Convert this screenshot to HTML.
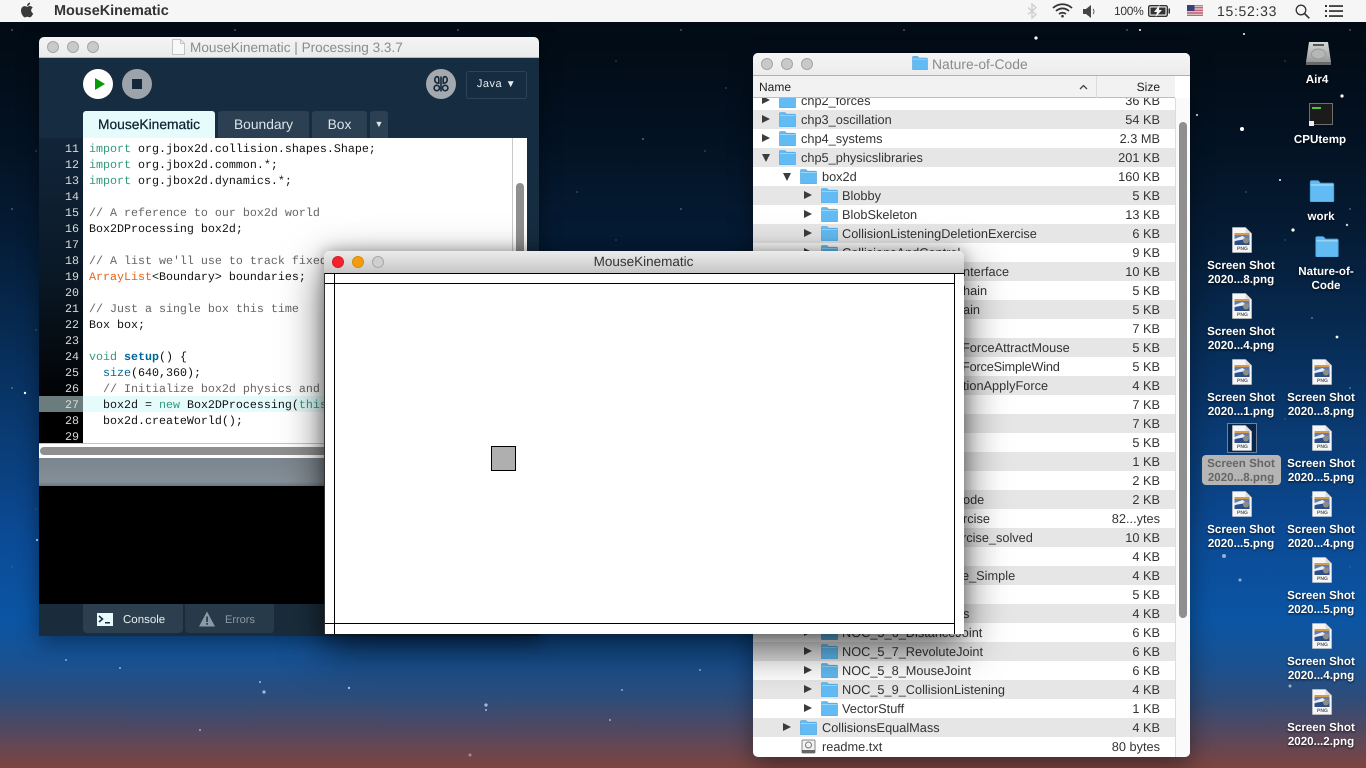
<!DOCTYPE html>
<html><head><meta charset="utf-8"><title>MouseKinematic</title>
<style>
*{box-sizing:border-box;margin:0;padding:0}
html,body{width:1366px;height:768px;overflow:hidden;background:#000}
body{position:relative;font-family:"Liberation Sans",sans-serif;text-rendering:geometricPrecision}
#wall{position:absolute;inset:0;background:linear-gradient(180deg,#020a12 0,#03101f 120px,#051c36 240px,#072c55 340px,#0a3d78 450px,#0b4b96 540px,#0b55a4 620px,#1a5190 665px,#2f4c78 700px,#54485f 732px,#7d4540 768px)}
#stars{position:absolute;inset:0;height:640px;opacity:.6;-webkit-mask-image:linear-gradient(#000 0,#000 380px,rgba(0,0,0,.35) 560px,transparent 640px);
background-image:radial-gradient(circle at 12px 30px,#fff 0,#fff .4px,transparent .9px),radial-gradient(circle at 57px 88px,#dfe9f5 0,#dfe9f5 .3px,transparent .8px),radial-gradient(circle at 131px 13px,#fff 0,#fff .3px,transparent .8px),radial-gradient(circle at 170px 61px,#cfe0f2 0,#cfe0f2 .3px,transparent .8px),radial-gradient(circle at 36px 151px,#fff 0,#fff .3px,transparent .8px),radial-gradient(circle at 197px 139px,#e8f0fa 0,#e8f0fa .5px,transparent 1px);background-size:223px 179px}
#s2{position:absolute;left:0;top:0}
#menu{position:absolute;left:0;top:0;width:1366px;height:22px;background:#f6f6f6;color:#333}
#menu span{position:absolute;top:0;line-height:23px;white-space:nowrap}
/* Processing */
#pw{position:absolute;left:39px;top:37px;width:500px;height:599px;background:#162c40;border-radius:5px 5px 0 0;overflow:hidden;box-shadow:0 6px 22px rgba(0,0,0,.4)}
#pt{position:absolute;left:0;top:0;width:500px;height:21px;background:linear-gradient(#f4f4f4,#ebebeb);border-bottom:1px solid #b8b8b8}
.tl{position:absolute;width:12px;height:12px;border-radius:50%;background:#c9c9c9;border:1px solid #a6a6a6}
.ttl{position:absolute;white-space:nowrap;color:#8b8b8b}
.tab{position:absolute;top:74px;height:27px;background:#2b4053;color:#dce4ea;border-radius:3px 3px 0 0;font-size:13.8px;line-height:27px;text-align:center;white-space:nowrap}
#gut{position:absolute;left:0;top:101px;width:44px;height:305px;background:linear-gradient(#11253a 0,#0a1826 45%,#000 90%);color:#d8dcdc;font:11.67px/16px "Liberation Mono",monospace;text-align:right;padding:3px 4px 0 0;overflow:hidden}
#ed{position:absolute;left:44px;top:101px;width:444px;height:305px;background:#fff;overflow:hidden;font:11.67px/16px "Liberation Mono",monospace;color:#111;white-space:pre;padding:3px 0 0 6px}
#gut div,#ed div{height:16px;position:relative}
#gut div.hl,#ed div.hl{position:absolute;top:258px;left:0;height:16px}
.k{color:#33997e}.c{color:#666}.o{color:#e2661a}.f{color:#006699;font-weight:bold}
/* Finder */
#fw{position:absolute;left:753px;top:53px;width:437px;height:704px;background:#fff;border-radius:5px;overflow:hidden;box-shadow:0 8px 24px rgba(0,0,0,.4)}
#list{position:absolute;left:0;top:45px;width:422px;height:659px;overflow:hidden;font-size:12.75px;color:#333}
#rows{position:absolute;left:0;top:-7px;width:422px}
.r{position:relative;height:19px;line-height:19px;white-space:nowrap}
.r:nth-child(even){background:#e6e6e6}
.r svg{position:absolute;top:2px;width:17px;height:15px}
.r .n{position:absolute}
.r .s{position:absolute;right:15px}
.r i{position:absolute;top:5px;width:0;height:0;border-left:8px solid #3c3c3c;border-top:4.5px solid transparent;border-bottom:4.5px solid transparent}
.r i.d{border-left:4.5px solid transparent;border-right:4.5px solid transparent;border-top:8px solid #3c3c3c;border-bottom:0;top:6px}
.a svg{left:26px}.a .n{left:48px}.a i{left:9px}
.b svg{left:47px}.b .n{left:69px}.b i{left:30px}
.e svg{left:68px}.e .n{left:89px}.e i{left:51px}
.r .g{position:absolute;left:210px}
/* Sketch */
#sk{position:absolute;left:324px;top:251px;width:640px;height:383px;box-shadow:0 14px 42px rgba(0,0,0,.62),0 0 14px rgba(0,0,0,.3);border-radius:5px 5px 0 0;background:#fff;overflow:hidden}
#skt{position:absolute;left:0;top:0;width:640px;height:22px;background:linear-gradient(#ececec,#c6c6c6)}
.bl{position:absolute;background:#000}
/* Desktop */
.lab{position:absolute;width:86px;text-align:center;color:#fff;font-weight:bold;font-size:11.6px;line-height:14px;text-shadow:0 1px 2px rgba(0,0,0,.8);white-space:nowrap}
.png{position:absolute;width:20px;height:26px}
.png text{font:bold 5px "Liberation Sans",sans-serif;fill:#555}
</style></head><body>
<svg width="0" height="0" style="position:absolute"><defs>
<symbol id="fd" viewBox="0 0 17 15"><path d="M.5 3V1.4C.5.8.9.5 1.4.5h4c.5 0 .8.2 1 .5l1 1.2h8.2c.5 0 .9.4.9.9v11c0 .5-.4.9-.9.9H1.4c-.5 0-.9-.4-.9-.9z" fill="#62bcf3" stroke="#4a9fd8" stroke-width=".6"/><path d="M.8 3.4h15.4" stroke="#a4dcfb" stroke-width=".8"/></symbol>
<symbol id="pg" viewBox="0 0 20 26"><path d="M.5.5h13l6 6v19H.5z" fill="#f6f6f6" stroke="#cfcfcf" stroke-width=".6"/><path d="M13.5.5v6h6z" fill="#ddd"/><rect x="2.5" y="6" width="15" height="12" fill="#5c7fb8"/><rect x="2.5" y="6" width="15" height="2" fill="#d89a4a"/><path d="M2.5 15l6-4 9 2v5h-15z" fill="#2c4d8a"/><path d="M2.5 12l8-3 4 3-12 2z" fill="#e8eef5"/><circle cx="14" cy="13.5" r="3" fill="#8d8d86"/></symbol>
</defs></svg>
<div id="wall"></div><div id="stars"></div>
<svg id="s2" width="1366" height="768" fill="#fff">
<circle cx="1036" cy="38" r="1.6"/><circle cx="1242" cy="129" r="2"/><circle cx="1342" cy="96" r="1.6"/><circle cx="1293" cy="230" r="1.6"/><circle cx="1140" cy="30" r="1"/><circle cx="1244" cy="34" r="1"/><circle cx="1197" cy="115" r="1"/><circle cx="1280" cy="180" r="1"/><circle cx="1347" cy="225" r="1.2" opacity=".8"/><circle cx="1337" cy="337" r="1.4"/><circle cx="25" cy="393" r="1.2"/><circle cx="37" cy="540" r="1"/><circle cx="1224" cy="556" r="2" fill="#8fb3d8"/><circle cx="1240" cy="580" r="1.5" fill="#8fb3d8"/><circle cx="1290" cy="686" r="1.5" fill="#9fb3cc"/><circle cx="264" cy="692" r="1.6" fill="#9cc0e6"/><circle cx="486" cy="705" r="1.6" fill="#9cc0e6"/><circle cx="349" cy="688" r="1.2" fill="#9cc0e6"/><circle cx="486" cy="710" r="1" fill="#9cc0e6"/><circle cx="260" cy="682" r="1" fill="#9cc0e6"/><circle cx="622" cy="690" r="1" fill="#8fb3d8"/><circle cx="700" cy="670" r="1" fill="#8fb3d8"/><circle cx="610" cy="720" r="1" fill="#a7a7c0"/><circle cx="120" cy="668" r="1" fill="#8fb3d8"/><circle cx="66" cy="660" r="1" fill="#8fb3d8"/><circle cx="200" cy="730" r="1" fill="#a7a7c0"/><circle cx="470" cy="755" r="1.5" fill="#a88"/>
</svg>

<!-- Processing window -->
<div id="pw">
 <div id="pt"></div>
 <div class="tl" style="left:8px;top:4px"></div><div class="tl" style="left:28px;top:4px"></div><div class="tl" style="left:48px;top:4px"></div>
 <svg style="position:absolute;left:133px;top:2px" width="13" height="16"><path d="M.5.5h8l4 4v11H.5z" fill="#f8f8f8" stroke="#c4c4c4"/><path d="M8.5.5v4h4" fill="none" stroke="#c4c4c4"/></svg>
 <div class="ttl" style="left:151px;top:2px;font-size:13.6px;line-height:17px">MouseKinematic | Processing 3.3.7</div>
 <svg style="position:absolute;left:44px;top:31px" width="72" height="32"><circle cx="15" cy="16" r="15" fill="#fff"/><path d="M12 10L22 16l-10 6z" fill="#0a9a06"/><circle cx="54" cy="16" r="15" fill="#9da3aa"/><rect x="49" y="11" width="10" height="10" fill="#13283a"/></svg>
 <svg style="position:absolute;left:387px;top:31px" width="30" height="32" fill="none" stroke="#14283a" stroke-width="1.6"><circle cx="15" cy="16" r="15" fill="#a3a9af" stroke="none"/><path d="M15 8.500v15"/><path d="M12.800 15.200c-2.800 0-4.300-1.500-4-4 .2-1.800 1.500-2.800 2.600-2.500 1 .3 1.400 1.300 1.400 2.500z"/><path d="M17.200 15.200c2.800 0 4.300-1.500 4-4-.2-1.800-1.500-2.800-2.600-2.500-1 .3-1.400 1.300-1.400 2.500z"/><circle cx="10.800" cy="20" r="2.700"/><circle cx="19.200" cy="20" r="2.700"/></svg>
 <div style="position:absolute;left:427px;top:34px;width:61px;height:28px;border:1px solid #2d4458;border-radius:3px;color:#e6ecf0;font-size:11px;line-height:25px;text-align:center;letter-spacing:.5px">Java <span style="font-size:10px">&#9660;</span></div>
 <div class="tab" style="left:44px;width:132px;background:#e6fbfb;color:#0d2233;-webkit-text-stroke:.25px #0d2233">MouseKinematic</div>
 <div class="tab" style="left:179px;width:91px">Boundary</div>
 <div class="tab" style="left:273px;width:55px">Box</div>
 <div class="tab" style="left:331px;width:18px;font-size:9px">&#9660;</div>
 <div id="gut"><div class="hl" style="background:#6b7c7c;width:44px"></div><div>11</div><div>12</div><div>13</div><div>14</div><div>15</div><div>16</div><div>17</div><div>18</div><div>19</div><div>20</div><div>21</div><div>22</div><div>23</div><div>24</div><div>25</div><div>26</div><div>27</div><div>28</div><div>29</div></div>
 <div id="ed"><div class="hl" style="background:#e6fbfb;width:444px"></div><div><span class="k">import</span> org.jbox2d.collision.shapes.Shape;</div><div><span class="k">import</span> org.jbox2d.common.*;</div><div><span class="k">import</span> org.jbox2d.dynamics.*;</div><div></div><div class="c">// A reference to our box2d world</div><div>Box2DProcessing box2d;</div><div></div><div class="c">// A list we'll use to track fixed objects</div><div><span class="o">ArrayList</span>&lt;Boundary&gt; boundaries;</div><div></div><div class="c">// Just a single box this time</div><div>Box box;</div><div></div><div><span class="k">void</span> <span class="f">setup</span>() {</div><div>  <span style="color:#006699">size</span>(640,360);</div><div class="c">  // Initialize box2d physics and create the world</div><div>  box2d = <span class="k">new</span> Box2DProcessing(<span class="k">this</span>);</div><div>  box2d.createWorld();</div><div></div></div>
 <div style="position:absolute;left:473px;top:101px;width:1px;height:305px;background:#c8c8c8"></div>
 <div style="position:absolute;left:477px;top:146px;width:8px;height:120px;background:#8f8f8f;border-radius:4px"></div>
 <div style="position:absolute;left:0;top:406px;width:500px;height:15px;background:#fff;border-top:1px solid #c4c4c4"></div>
 <div style="position:absolute;left:1px;top:410px;width:480px;height:8px;background:#8f8f8f;border-radius:4px"></div>
 <div style="position:absolute;left:0;top:421px;width:500px;height:28px;background:linear-gradient(#7b858d,#858f97 85%,#6d777f)"></div>
 <div style="position:absolute;left:0;top:449px;width:500px;height:118px;background:#000"></div>
 <div style="position:absolute;left:0;top:567px;width:500px;height:32px;background:#1a2c3b"></div>
 <div style="position:absolute;left:44px;top:567px;width:100px;height:29px;background:#2c3f4e;border-radius:0 0 4px 4px"></div>
 <div style="position:absolute;left:146px;top:567px;width:89px;height:29px;background:#273a49;border-radius:0 0 4px 4px"></div>
 <svg style="position:absolute;left:58px;top:576px" width="16" height="13"><rect width="16" height="13" fill="#e6fbfb"/><path d="M2 3l3.500 3L2 9" fill="none" stroke="#1a2c3b" stroke-width="1.500"/><rect x="8" y="9" width="5" height="1.500" fill="#1a2c3b"/></svg>
 <div class="ttl" style="left:84px;top:575px;color:#e6eef2;font-size:11.5px;line-height:16px">Console</div>
 <svg style="position:absolute;left:160px;top:574px" width="16" height="16"><path d="M8 .5L16 15.500H0z" fill="#8b9aa4"/><rect x="7.200" y="5.500" width="1.700" height="5.500" fill="#273a49"/><rect x="7.200" y="12" width="1.700" height="1.700" fill="#273a49"/></svg>
 <div class="ttl" style="left:186px;top:575px;color:#8b9aa4;font-size:11px;line-height:16px">Errors</div>
</div>

<!-- Finder window -->
<div id="fw">
 <div style="position:absolute;left:0;top:0;width:437px;height:23px;background:linear-gradient(#f5f5f5,#ececec);border-bottom:1px solid #b0b0b0"></div>
 <div class="tl" style="left:8px;top:5px"></div><div class="tl" style="left:28px;top:5px"></div><div class="tl" style="left:48px;top:5px"></div>
 <svg style="position:absolute;left:159px;top:3px" width="16" height="14"><use href="#fd"/></svg>
 <div class="ttl" style="left:179px;top:3px;font-size:13.9px;line-height:16px">Nature-of-Code</div>
 <div style="position:absolute;left:0;top:23px;width:422px;height:22px;background:#f2f2f2;border-bottom:1px solid #bdbdbd"></div>
 <div style="position:absolute;left:343px;top:23px;width:1px;height:22px;background:#dcdcdc"></div>
 <div class="ttl" style="left:6px;top:26px;color:#222;font-size:12px;line-height:16px">Name</div>
 <svg style="position:absolute;left:326px;top:31px" width="9" height="6"><path d="M1 5l3.500-3.500L8 5" fill="none" stroke="#444" stroke-width="1.300"/></svg>
 <div class="ttl" style="right:30px;top:26px;color:#222;font-size:12px;line-height:16px">Size</div>
 <div id="list"><div id="rows">
  <div class="r a"><i></i><svg><use href="#fd"/></svg><span class="n">chp2_forces</span><span class="s">36 KB</span></div>
  <div class="r a"><i></i><svg><use href="#fd"/></svg><span class="n">chp3_oscillation</span><span class="s">54 KB</span></div>
  <div class="r a"><i></i><svg><use href="#fd"/></svg><span class="n">chp4_systems</span><span class="s">2.3 MB</span></div>
  <div class="r a"><i class="d"></i><svg><use href="#fd"/></svg><span class="n">chp5_physicslibraries</span><span class="s">201 KB</span></div>
  <div class="r b"><i class="d"></i><svg><use href="#fd"/></svg><span class="n">box2d</span><span class="s">160 KB</span></div>
  <div class="r e"><i></i><svg><use href="#fd"/></svg><span class="n">Blobby</span><span class="s">5 KB</span></div>
  <div class="r e"><i></i><svg><use href="#fd"/></svg><span class="n">BlobSkeleton</span><span class="s">13 KB</span></div>
  <div class="r e"><i></i><svg><use href="#fd"/></svg><span class="n">CollisionListeningDeletionExercise</span><span class="s">6 KB</span></div>
  <div class="r e"><i></i><svg><use href="#fd"/></svg><span class="n">CollisionsAndControl</span><span class="s">9 KB</span></div>
  <div class="r"><span class="g">nterface</span><span class="s">10 KB</span></div>
  <div class="r"><span class="g">hain</span><span class="s">5 KB</span></div>
  <div class="r"><span class="g">ain</span><span class="s">5 KB</span></div>
  <div class="r"><span class="s">7 KB</span></div>
  <div class="r"><span class="g" style="left:209px">ForceAttractMouse</span><span class="s">5 KB</span></div>
  <div class="r"><span class="g" style="left:209px;letter-spacing:-.2px">ForceSimpleWind</span><span class="s">5 KB</span></div>
  <div class="r"><span class="g">tionApplyForce</span><span class="s">4 KB</span></div>
  <div class="r"><span class="s">7 KB</span></div>
  <div class="r"><span class="s">7 KB</span></div>
  <div class="r"><span class="s">5 KB</span></div>
  <div class="r"><span class="s">1 KB</span></div>
  <div class="r"><span class="s">2 KB</span></div>
  <div class="r"><span class="g">ode</span><span class="s">2 KB</span></div>
  <div class="r"><span class="g">rcise</span><span class="s">82...ytes</span></div>
  <div class="r"><span class="g" style="left:209px">rcise_solved</span><span class="s">10 KB</span></div>
  <div class="r"><span class="s">4 KB</span></div>
  <div class="r"><span class="g" style="left:209px">e_Simple</span><span class="s">4 KB</span></div>
  <div class="r"><span class="s">5 KB</span></div>
  <div class="r"><span class="g">s</span><span class="s">4 KB</span></div>
  <div class="r e"><i></i><svg><use href="#fd"/></svg><span class="n">NOC_5_6_DistanceJoint</span><span class="s">6 KB</span></div>
  <div class="r e"><i></i><svg><use href="#fd"/></svg><span class="n">NOC_5_7_RevoluteJoint</span><span class="s">6 KB</span></div>
  <div class="r e"><i></i><svg><use href="#fd"/></svg><span class="n">NOC_5_8_MouseJoint</span><span class="s">6 KB</span></div>
  <div class="r e"><i></i><svg><use href="#fd"/></svg><span class="n">NOC_5_9_CollisionListening</span><span class="s">4 KB</span></div>
  <div class="r e"><i></i><svg><use href="#fd"/></svg><span class="n">VectorStuff</span><span class="s">1 KB</span></div>
  <div class="r b"><i></i><svg><use href="#fd"/></svg><span class="n">CollisionsEqualMass</span><span class="s">4 KB</span></div>
  <div class="r b"><svg viewBox="0 0 17 15" style="left:47px"><rect x="2" y="1" width="13" height="13" rx="1" fill="#f2f2f2" stroke="#888"/><rect x="2" y="11" width="13" height="3" fill="#666"/><circle cx="8.500" cy="6" r="3" fill="none" stroke="#777"/></svg><span class="n">readme.txt</span><span class="s">80 bytes</span></div>
 </div></div>
 <div style="position:absolute;left:422px;top:45px;width:15px;height:659px;background:#fafafa;border-left:1px solid #dcdcdc"></div>
 <div style="position:absolute;left:426px;top:69px;width:8px;height:496px;background:#8f8f8f;border-radius:4px"></div>
</div>

<!-- Sketch window -->
<div id="sk">
 <div id="skt"></div>
 <div class="tl" style="left:8px;top:5px;background:#f5222d;border-color:#d81e28"></div>
 <div class="tl" style="left:28px;top:5px;background:#f49d0c;border-color:#d98c0a"></div>
 <div class="tl" style="left:48px;top:5px;background:#cfcfcf;border-color:#a8a8a8"></div>
 <div class="ttl" style="left:0;width:639px;text-align:center;top:3px;color:#333;font-size:13.5px;line-height:16px">MouseKinematic</div>
 <div class="bl" style="left:0;top:22px;width:640px;height:1px"></div>
 <div class="bl" style="left:0;top:32px;width:631px;height:1px"></div>
 <div class="bl" style="left:0;top:372px;width:631px;height:1px"></div>
 <div class="bl" style="left:0;top:22px;width:1px;height:361px;background:#333"></div>
 <div class="bl" style="left:10px;top:22px;width:1px;height:361px"></div>
 <div class="bl" style="left:630px;top:22px;width:1px;height:361px"></div>
 <div style="position:absolute;left:167px;top:195px;width:25px;height:25px;background:#afafaf;border:1px solid #000"></div>
</div>

<!-- Menu bar -->
<div id="menu">
 <svg style="position:absolute;left:20px;top:2px" width="15" height="16" viewBox="2 1 20 22"><path fill="#3a3a3a" d="M17.05 12.54c-.03-2.6 2.12-3.85 2.22-3.91-1.21-1.77-3.09-2.01-3.76-2.04-1.6-.16-3.12.94-3.93.94-.81 0-2.06-.92-3.39-.9-1.74.03-3.35 1.01-4.25 2.57-1.81 3.14-.46 7.8 1.3 10.35.86 1.25 1.89 2.65 3.24 2.6 1.3-.05 1.79-.84 3.36-.84 1.57 0 2.01.84 3.39.81 1.4-.02 2.28-1.27 3.14-2.53.99-1.45 1.4-2.86 1.42-2.93-.03-.01-2.72-1.04-2.75-4.12zM14.46 4.9c.72-.87 1.2-2.08 1.07-3.28-1.03.04-2.28.69-3.02 1.56-.66.77-1.24 2-1.09 3.18 1.15.09 2.32-.58 3.04-1.46z"/></svg>
 <span style="left:54px;font-weight:bold;font-size:14.45px">MouseKinematic</span>
 <svg style="position:absolute;left:1027px;top:3px" width="10" height="16" fill="none" stroke="#cfcfcf" stroke-width="1.400"><path d="M1 4.500l8 7-4 3.500V1l4 3.500-8 7"/></svg>
 <svg style="position:absolute;left:1052px;top:3px" width="21" height="15" fill="none" stroke="#333" stroke-width="1.800"><path d="M1 5c5.500-5 13.500-5 19 0M4 8c3.800-3.400 9.200-3.400 13 0M7 11c2-1.700 5-1.700 7 0"/><circle cx="10.500" cy="13.200" r="1.300" fill="#333" stroke="none"/></svg>
 <svg style="position:absolute;left:1083px;top:5px" width="14" height="13"><path d="M0 4h3l5-4v13L3 9H0z" fill="#444"/><path d="M10 4c1.300 1.500 1.300 3.500 0 5" fill="none" stroke="#555"/></svg>
 <span style="left:1114px;font-size:12px;letter-spacing:-.3px">100%</span>
 <svg style="position:absolute;left:1148px;top:5px" width="23" height="12"><rect x=".7" y=".7" width="18.600" height="10.600" rx="1.500" fill="none" stroke="#333" stroke-width="1.400"/><rect x="20.500" y="3.500" width="1.500" height="5" fill="#333"/><rect x="2.500" y="2.500" width="15" height="7" fill="#333"/><path d="M11.500 0L6 7h3l-1.500 5L14 5h-3z" fill="#f6f6f6"/></svg>
 <svg style="position:absolute;left:1187px;top:5px" width="16" height="11"><rect width="16" height="11" fill="#e8e8f0"/><path d="M0 .8h16M0 2.400h16M0 4h16M0 5.600h16M0 7.200h16M0 8.800h16M0 10.400h16" stroke="#b9394a" stroke-width=".8"/><rect width="7.500" height="6" fill="#3a3f78"/></svg>
 <span style="left:1217px;font-size:14px;letter-spacing:.7px">15:52:33</span>
 <svg style="position:absolute;left:1295px;top:4px" width="15" height="15" fill="none" stroke="#333" stroke-width="1.300"><circle cx="6" cy="6" r="4.800"/><path d="M9.500 9.500L14.300 14.300" stroke-width="1.600"/></svg>
 <svg style="position:absolute;left:1325px;top:5px" width="18" height="12" fill="#333"><rect width="2" height="2" y="0"/><rect width="2" height="2" y="5"/><rect width="2" height="2" y="10"/><rect x="4" width="14" height="1.700" y=".2"/><rect x="4" width="14" height="1.700" y="5.200"/><rect x="4" width="14" height="1.700" y="10.200"/></svg>
</div>

<!-- Desktop icons -->
<svg style="position:absolute;left:1306px;top:41px" width="25" height="25"><defs><linearGradient id="hd" x1="0" y1="0" x2="0" y2="1"><stop offset="0" stop-color="#d6d8d8"/><stop offset="1" stop-color="#8d8f90"/></linearGradient></defs><path d="M3 1h19l3 20v3H0v-3z" fill="url(#hd)"/><rect x="7" y="3" width="11" height="2" fill="#555"/><ellipse cx="12.500" cy="13" rx="7" ry="5" fill="#b5b7b7" stroke="#989a9a"/><rect y="21" width="25" height="3" fill="#66686a"/></svg>
<div class="lab" style="left:1274px;top:73px">Air4</div>
<svg style="position:absolute;left:1309px;top:103px" width="24" height="23"><rect x=".5" y=".5" width="23" height="21" fill="#1b1b1b" stroke="#6e6e6e"/><rect x="3" y="4" width="9" height="2" fill="#58c04a"/><rect x="0" y="18" width="5" height="5" fill="#eee"/></svg>
<div class="lab" style="left:1277px;top:133px">CPUtemp</div>
<svg style="position:absolute;left:1309px;top:180px" width="26" height="22"><use href="#fd"/></svg>
<div class="lab" style="left:1278px;top:210px">work</div>
<svg style="position:absolute;left:1314px;top:236px" width="26" height="21"><use href="#fd"/></svg>
<div class="lab" style="left:1283px;top:265px">Nature-of-<br>Code</div>

<div style="position:absolute;left:1227px;top:423px;width:30px;height:30px;background:rgba(0,0,0,.35);border:1px solid #6f8199"></div>
<div style="position:absolute;left:1202px;top:455px;width:79px;height:30px;background:#b5b5b5;border-radius:4px"></div>

<svg class="png" style="left:1232px;top:227px"><use href="#pg"/><text x="5" y="23">PNG</text></svg>
<div class="lab" style="left:1198px;top:259px">Screen Shot<br>2020...8.png</div>
<svg class="png" style="left:1232px;top:293px"><use href="#pg"/><text x="5" y="23">PNG</text></svg>
<div class="lab" style="left:1198px;top:325px">Screen Shot<br>2020...4.png</div>
<svg class="png" style="left:1232px;top:359px"><use href="#pg"/><text x="5" y="23">PNG</text></svg>
<div class="lab" style="left:1198px;top:391px">Screen Shot<br>2020...1.png</div>
<svg class="png" style="left:1232px;top:425px"><use href="#pg"/><text x="5" y="23">PNG</text></svg>
<div class="lab" style="left:1198px;top:457px;color:#666;text-shadow:none">Screen Shot<br>2020...8.png</div>
<svg class="png" style="left:1232px;top:491px"><use href="#pg"/><text x="5" y="23">PNG</text></svg>
<div class="lab" style="left:1198px;top:523px">Screen Shot<br>2020...5.png</div>

<svg class="png" style="left:1312px;top:359px"><use href="#pg"/><text x="5" y="23">PNG</text></svg>
<div class="lab" style="left:1278px;top:391px">Screen Shot<br>2020...8.png</div>
<svg class="png" style="left:1312px;top:425px"><use href="#pg"/><text x="5" y="23">PNG</text></svg>
<div class="lab" style="left:1278px;top:457px">Screen Shot<br>2020...5.png</div>
<svg class="png" style="left:1312px;top:491px"><use href="#pg"/><text x="5" y="23">PNG</text></svg>
<div class="lab" style="left:1278px;top:523px">Screen Shot<br>2020...4.png</div>
<svg class="png" style="left:1312px;top:557px"><use href="#pg"/><text x="5" y="23">PNG</text></svg>
<div class="lab" style="left:1278px;top:589px">Screen Shot<br>2020...5.png</div>
<svg class="png" style="left:1312px;top:623px"><use href="#pg"/><text x="5" y="23">PNG</text></svg>
<div class="lab" style="left:1278px;top:655px">Screen Shot<br>2020...4.png</div>
<svg class="png" style="left:1312px;top:689px"><use href="#pg"/><text x="5" y="23">PNG</text></svg>
<div class="lab" style="left:1278px;top:721px">Screen Shot<br>2020...2.png</div>
</body></html>
